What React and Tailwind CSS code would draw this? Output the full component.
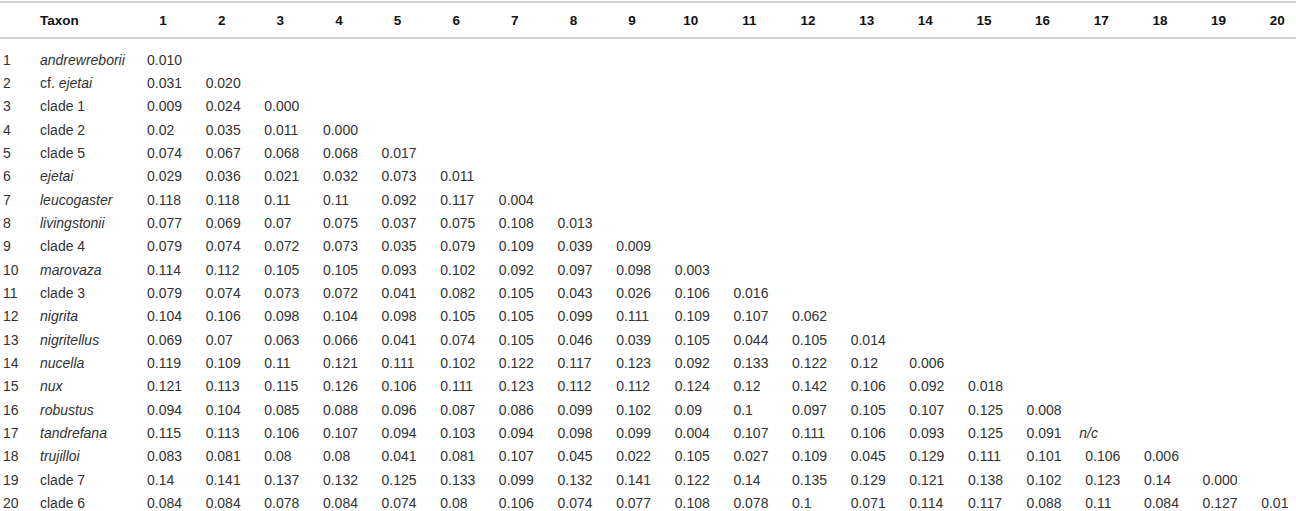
import React from 'react';

const rows = [
  [<i>andrewreborii</i>, '0.010'],
  [<>cf. <i>ejetai</i></>, '0.031 0.020'],
  ['clade 1', '0.009 0.024 0.000'],
  ['clade 2', '0.02 0.035 0.011 0.000'],
  ['clade 5', '0.074 0.067 0.068 0.068 0.017'],
  [<i>ejetai</i>, '0.029 0.036 0.021 0.032 0.073 0.011'],
  [<i>leucogaster</i>, '0.118 0.118 0.11 0.11 0.092 0.117 0.004'],
  [<i>livingstonii</i>, '0.077 0.069 0.07 0.075 0.037 0.075 0.108 0.013'],
  ['clade 4', '0.079 0.074 0.072 0.073 0.035 0.079 0.109 0.039 0.009'],
  [<i>marovaza</i>, '0.114 0.112 0.105 0.105 0.093 0.102 0.092 0.097 0.098 0.003'],
  ['clade 3', '0.079 0.074 0.073 0.072 0.041 0.082 0.105 0.043 0.026 0.106 0.016'],
  [<i>nigrita</i>, '0.104 0.106 0.098 0.104 0.098 0.105 0.105 0.099 0.111 0.109 0.107 0.062'],
  [<i>nigritellus</i>, '0.069 0.07 0.063 0.066 0.041 0.074 0.105 0.046 0.039 0.105 0.044 0.105 0.014'],
  [<i>nucella</i>, '0.119 0.109 0.11 0.121 0.111 0.102 0.122 0.117 0.123 0.092 0.133 0.122 0.12 0.006'],
  [<i>nux</i>, '0.121 0.113 0.115 0.126 0.106 0.111 0.123 0.112 0.112 0.124 0.12 0.142 0.106 0.092 0.018'],
  [<i>robustus</i>, '0.094 0.104 0.085 0.088 0.096 0.087 0.086 0.099 0.102 0.09 0.1 0.097 0.105 0.107 0.125 0.008'],
  [<i>tandrefana</i>, '0.115 0.113 0.106 0.107 0.094 0.103 0.094 0.098 0.099 0.004 0.107 0.111 0.106 0.093 0.125 0.091 n/c'],
  [<i>trujilloi</i>, '0.083 0.081 0.08 0.08 0.041 0.081 0.107 0.045 0.022 0.105 0.027 0.109 0.045 0.129 0.111 0.101 0.106 0.006'],
  ['clade 7', '0.14 0.141 0.137 0.132 0.125 0.133 0.099 0.132 0.141 0.122 0.14 0.135 0.129 0.121 0.138 0.102 0.123 0.14 0.000'],
  ['clade 6', '0.084 0.084 0.078 0.084 0.074 0.08 0.106 0.074 0.077 0.108 0.078 0.1 0.071 0.114 0.117 0.088 0.11 0.084 0.127 0.01'],
];

const cols = Array.from({ length: 20 }, (_, i) => i + 1);
const grid = 'grid grid-cols-[40px_107px_repeat(19,58.65px)_49px]';

export default function App() {
  return (
    <div className="w-[1296px] h-[511px] overflow-hidden bg-white text-[14px] text-[#333]" style={{ fontFamily: '"Liberation Sans", Arial, sans-serif' }}>
      <div className="mt-[1px] border-t-2 border-[#cfcfcf]">
        {/* header */}
        <div className={`${grid} h-[36px] pt-[2px] items-center text-[13.5px] font-bold text-[#111] border-b-2 border-[#cfcfcf]`}>
          <div />
          <div>Taxon</div>
          {cols.map(c => (
            <div key={c}><div className="w-8 text-center">{c}</div></div>
          ))}
        </div>

        {/* body */}
        <div className="pt-[9.5px]">
          {rows.map(([name, vals], r) => (
            <div key={r} className={`${grid} h-[23.33px] items-center`}>
              <div className="pl-[3px]">{r + 1}</div>
              <div>{name}</div>
              {vals.split(' ').map((v, i) => (
                <div key={i} className="whitespace-nowrap">
                  {v === 'n/c' ? <i className="-ml-[6px]">n/c</i> : v}
                </div>
              ))}
            </div>
          ))}
        </div>
      </div>
    </div>
  );
}
